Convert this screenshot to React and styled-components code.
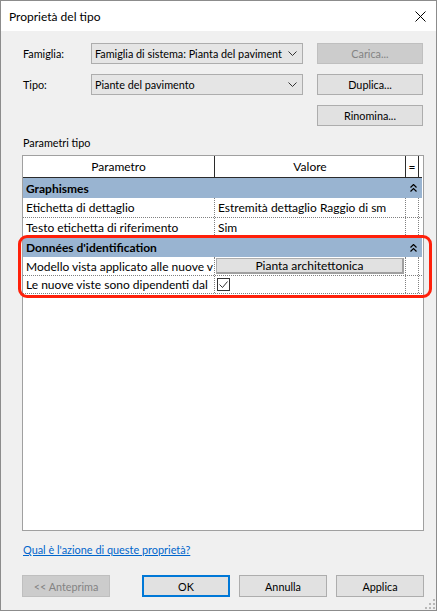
import React from 'react';
import styled, { createGlobalStyle } from 'styled-components';

const Global = createGlobalStyle`
  html, body { margin: 0; padding: 0; background: #fff; }
  body { font-family: Lato, "Noto Sans", sans-serif; font-size: 12px; color: #000; }
  * { box-sizing: border-box; }
`;

const Window = styled.div`
  position: relative;
  width: 437px;
  height: 611px;
  border: 1px solid #8c8c8c;
  background: #f0f0f0;
  display: flex;
  flex-direction: column;
`;

const TitleBar = styled.div`
  height: 30px;
  flex: none;
  background: #fff;
  display: flex;
  align-items: center;
  justify-content: space-between;
  padding: 0 10px 0 8px;
  font-size: 12px;
`;

const Content = styled.div`
  flex: 1;
  display: flex;
  flex-direction: column;
  padding: 12px 12px 13px 21px;
`;

const TopGrid = styled.div`
  display: grid;
  grid-template-columns: 55px 212px 106px;
  grid-auto-rows: 21px;
  column-gap: 14px;
  row-gap: 10px;
  font-size: 10.8px;
`;

const Label = styled.div`
  display: flex;
  align-items: center;
  padding-left: 1px;
`;

const Combo = styled.div`
  display: flex;
  align-items: center;
  justify-content: space-between;
  border: 1px solid #adadad;
  background: #e5e5e5;
  padding: 0 5px 0 3px;
`;

const ComboText = styled.span`
  white-space: nowrap;
  overflow: hidden;
  flex: 1;
  min-width: 0;
`;

const Button = styled.div`
  display: flex;
  align-items: center;
  justify-content: center;
  height: ${p => p.$h || 21}px;
  width: ${p => p.$w ? p.$w + 'px' : 'auto'};
  flex: none;
  font-size: 10.8px;
  border: ${p => p.$default ? '2px solid #0078d7' : p.$disabled ? '1px solid #bfbfbf' : '1px solid #adadad'};
  background: ${p => p.$disabled ? '#cccccc' : '#e1e1e1'};
  color: ${p => p.$disabled ? '#838383' : '#000'};
  grid-column: ${p => p.$col || 'auto'};
`;

const SectionLabel = styled.div`
  margin-top: 9px;
  line-height: 16px;
  padding-left: 1px;
  font-size: 10.8px;
`;

const Table = styled.div`
  margin-top: 4px;
  height: 376px;
  border: 1px solid #a0a0a0;
  background: #fff;
  display: flex;
  flex-direction: column;
  padding-right: 1px;
`;

const HeaderRow = styled.div`
  display: flex;
  height: 22px;
  border-bottom: 1px solid #2b2b2b;
  flex: none;
`;

const HeaderCell = styled.div`
  width: ${p => p.$w}px;
  flex: none;
  border-right: 1px solid #2b2b2b;
  display: flex;
  align-items: center;
  justify-content: center;
`;

const GroupRow = styled.div`
  display: flex;
  align-items: center;
  justify-content: space-between;
  height: ${p => p.$h}px;
  flex: none;
  background: #99b4d1;
  font-weight: 700;
  padding: 0 5px 0 3px;
`;

const DataRow = styled.div`
  display: flex;
  height: ${p => p.$h}px;
  flex: none;
  border-bottom: 1px dotted #808080;
`;

const Cell = styled.div`
  width: ${p => p.$w}px;
  flex: none;
  border-right: 1px dotted #808080;
  display: flex;
  align-items: center;
  padding-left: ${p => p.$pl ?? 3}px;
  white-space: nowrap;
  overflow: hidden;
`;

const ValueButton = styled.div`
  width: 188px;
  height: 16px;
  margin-left: 1px;
  background: #e1e1e1;
  border: 1px solid #adadad;
  border-right: 2px solid #a0a0a0;
  border-bottom: 2px solid #a0a0a0;
  display: flex;
  align-items: center;
  justify-content: center;
`;

const CheckBox = styled.div`
  width: 13px;
  height: 13px;
  border: 1px solid #333;
  background: #fff;
  display: flex;
  align-items: center;
  justify-content: center;
`;

const HelpLink = styled.a`
  margin-top: 11px;
  line-height: 16px;
  font-size: 10.9px;
  color: #0066cc;
  text-decoration: underline;
  padding-left: 1px;
  align-self: flex-start;
`;

const Footer = styled.div`
  margin-top: auto;
  display: flex;
  align-items: center;
`;

const FooterGroup = styled.div`
  margin-left: auto;
  display: flex;
  gap: 9px;
`;

const Highlight = styled.div`
  position: absolute;
  left: 17px;
  top: 234px;
  width: 414px;
  height: 63px;
  border: 3px solid #ff200a;
  border-radius: 9px;
  pointer-events: none;
`;

const Grip = styled.svg`
  position: absolute;
  right: 1px;
  bottom: 1px;
`;

const Chevron = () => (
  <svg width="9" height="5" viewBox="0 0 9 5" style={{ flex: 'none' }}>
    <path d="M0.5 0.5 L4.5 4.5 L8.5 0.5" fill="none" stroke="#333" strokeWidth="1" />
  </svg>
);

const Collapse = () => (
  <svg width="7" height="8" viewBox="0 0 7 8">
    <path d="M0.5 3.5 L3.5 0.5 L6.5 3.5 M0.5 7.5 L3.5 4.5 L6.5 7.5" fill="none" stroke="#000" strokeWidth="1.2" />
  </svg>
);

const Close = () => (
  <svg width="11" height="11" viewBox="0 0 11 11">
    <path d="M0.5 0.5 L10.5 10.5 M10.5 0.5 L0.5 10.5" stroke="#000" strokeWidth="1" />
  </svg>
);

const Check = () => (
  <svg width="11" height="11" viewBox="0 0 11 11">
    <path d="M1.5 5.5 L4.5 8.5 L9.5 2.5" fill="none" stroke="#333" strokeWidth="1" />
  </svg>
);

const COLS = [192, 191, 13];

export default function App() {
  return (
    <>
      <Global />
      <Window>
        <TitleBar>
          <span>Proprietà del tipo</span>
          <Close />
        </TitleBar>
        <Content>
          <TopGrid>
            <Label>Famiglia:</Label>
            <Combo><ComboText>Famiglia di sistema: Pianta del paviment</ComboText><Chevron /></Combo>
            <Button $disabled>Carica...</Button>
            <Label>Tipo:</Label>
            <Combo><ComboText>Piante del pavimento</ComboText><Chevron /></Combo>
            <Button>Duplica...</Button>
            <Button $col="3">Rinomina...</Button>
          </TopGrid>
          <SectionLabel>Parametri tipo</SectionLabel>
          <Table>
            <HeaderRow>
              <HeaderCell $w={COLS[0]}>Parametro</HeaderCell>
              <HeaderCell $w={COLS[1]}>Valore</HeaderCell>
              <HeaderCell $w={COLS[2]}>=</HeaderCell>
            </HeaderRow>
            <GroupRow $h={20}>Graphismes<Collapse /></GroupRow>
            <DataRow $h={20}>
              <Cell $w={COLS[0]}>Etichetta di dettaglio</Cell>
              <Cell $w={COLS[1]}>Estremità dettaglio Raggio di sm</Cell>
              <Cell $w={COLS[2]} />
            </DataRow>
            <DataRow $h={20}>
              <Cell $w={COLS[0]}>Testo etichetta di riferimento</Cell>
              <Cell $w={COLS[1]}>Sim</Cell>
              <Cell $w={COLS[2]} />
            </DataRow>
            <GroupRow $h={19}>Données d'identification<Collapse /></GroupRow>
            <DataRow $h={19}>
              <Cell $w={COLS[0]}>Modello vista applicato alle nuove v</Cell>
              <Cell $w={COLS[1]} $pl={0}><ValueButton>Pianta architettonica</ValueButton></Cell>
              <Cell $w={COLS[2]} />
            </DataRow>
            <DataRow $h={18}>
              <Cell $w={COLS[0]}>Le nuove viste sono dipendenti dal</Cell>
              <Cell $w={COLS[1]} $pl={2}><CheckBox><Check /></CheckBox></Cell>
              <Cell $w={COLS[2]} />
            </DataRow>
          </Table>
          <HelpLink>Qual è l'azione di queste proprietà?</HelpLink>
          <Footer>
            <Button $disabled $w={88} $h={22}>&lt;&lt; Anteprima</Button>
            <FooterGroup>
              <Button $default $w={88} $h={22}>OK</Button>
              <Button $w={88} $h={22}>Annulla</Button>
              <Button $w={88} $h={22}>Applica</Button>
            </FooterGroup>
          </Footer>
        </Content>
        <Highlight />
        <Grip width="10" height="10" viewBox="0 0 10 10">
          {[[8, 0], [8, 4], [4, 4], [8, 8], [4, 8], [0, 8]].map(([x, y], i) => (
            <rect key={i} x={x} y={y} width="2" height="2" fill="#b8b8b8" />
          ))}
        </Grip>
      </Window>
    </>
  );
}
